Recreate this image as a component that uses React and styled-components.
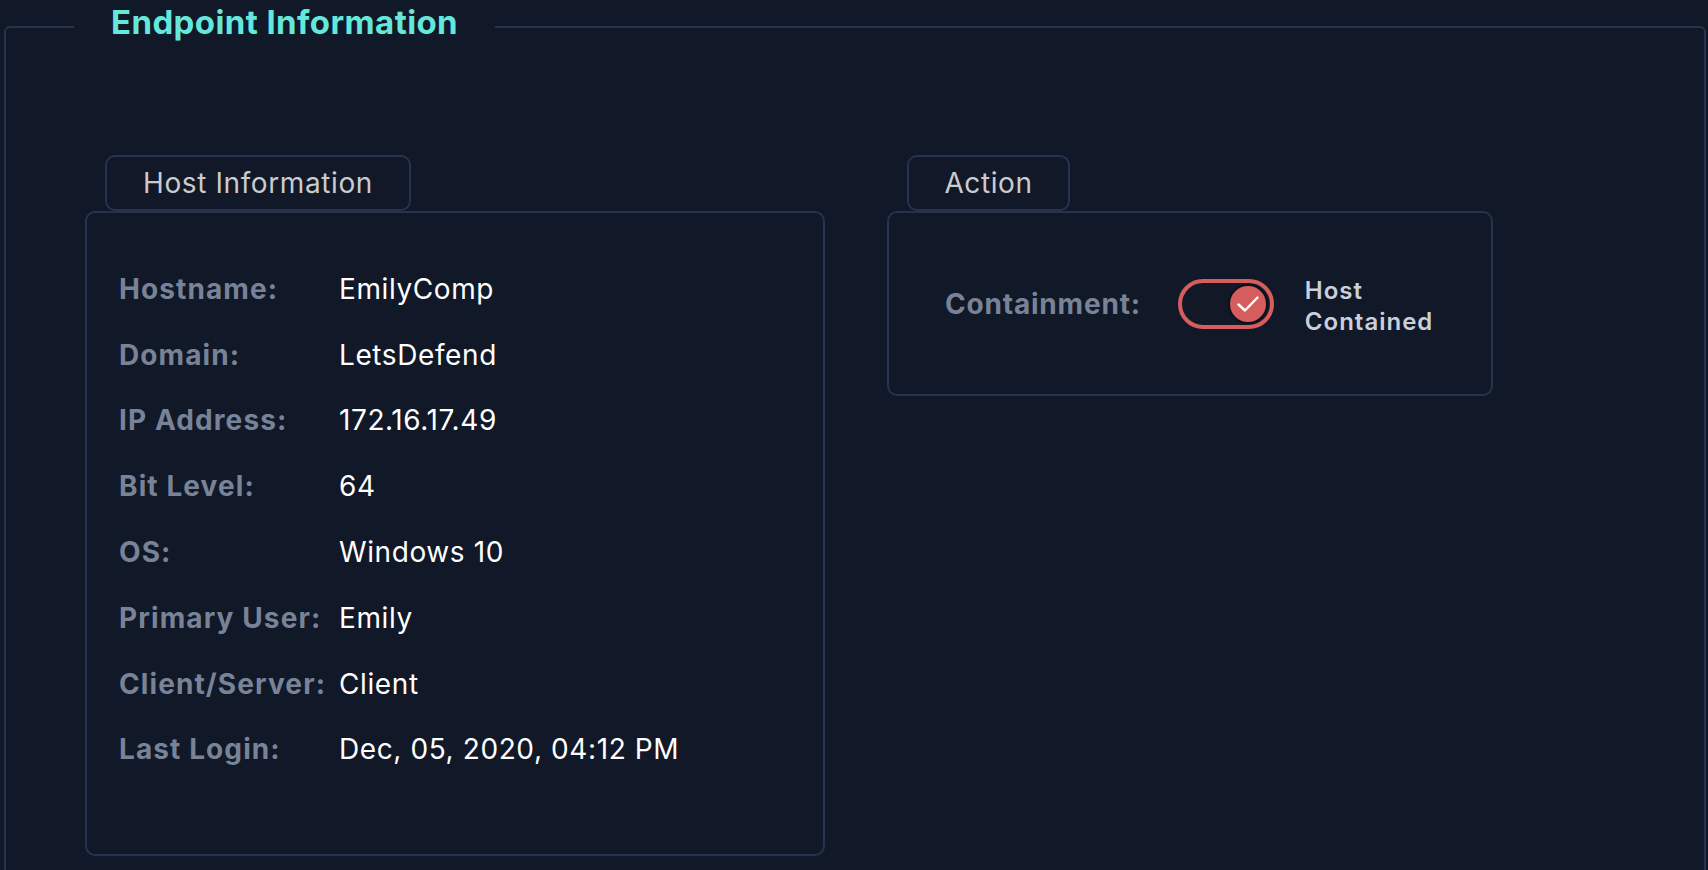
import React from "react";
import styled, { createGlobalStyle } from "styled-components";

const Global = createGlobalStyle`
  html, body {
    margin: 0;
    padding: 0;
    background: #111827;
    overflow: hidden;
    font-family: Inter, "Noto Sans", sans-serif;
  }
  * { box-sizing: border-box; }
`;

const Frame = styled.fieldset`
  margin: 6px 2px 0 4px;
  padding: 0;
  min-height: 900px;
  border: 2px solid #263250;
  border-radius: 6px;
`;

const Legend = styled.legend`
  margin-left: 68px;
  padding: 0 37px 8px;
  font-size: 33px;
  line-height: 33px;
  font-weight: 700;
  letter-spacing: 0.4px;
  color: #64e8dc;
`;

const Content = styled.div`
  padding: 108px 0 0 79px;
  display: flex;
  align-items: flex-start;
  gap: 62px;
`;

const Column = styled.section`
  display: flex;
  flex-direction: column;
  width: ${(p) => p.$width}px;
`;

const Tab = styled.div`
  margin-left: 20px;
  width: ${(p) => p.$width}px;
  height: 56px;
  border: 2px solid #263250;
  border-radius: 10px;
  display: flex;
  align-items: center;
  justify-content: center;
  font-size: 28px;
  letter-spacing: 0.6px;
  color: #cacbce;
`;

const Box = styled.div`
  border: 2px solid #263250;
  border-radius: 10px;
  padding: ${(p) => p.$pad};
  height: ${(p) => p.$height}px;
`;

const InfoGrid = styled.dl`
  margin: 0;
  display: grid;
  grid-template-columns: 220px 1fr;
  grid-auto-rows: 65.8px;
  align-items: center;
`;

const Label = styled.dt`
  font-size: 28px;
  font-weight: 700;
  letter-spacing: 1.1px;
  color: #788397;
  white-space: nowrap;
`;

const Value = styled.dd`
  margin: 0;
  font-size: 28px;
  font-weight: 400;
  letter-spacing: 0.6px;
  color: #ffffff;
  white-space: nowrap;
`;

const ActionRow = styled.div`
  height: 100%;
  display: flex;
  align-items: center;
`;

const ActionLabel = styled.span`
  font-size: 28px;
  font-weight: 700;
  letter-spacing: 0.8px;
  color: #788397;
  margin-right: 37px;
`;

const Toggle = styled.div`
  width: 96px;
  height: 50px;
  border: 4px solid #d65d5d;
  border-radius: 25px;
  background: #121826;
  display: flex;
  align-items: center;
  justify-content: flex-end;
  padding-right: 2px;
  margin-right: 31px;
`;

const Knob = styled.div`
  width: 40px;
  height: 40px;
  border-radius: 50%;
  background: #d65d5d;
  border: 2px solid #0c111c;
  display: flex;
  align-items: center;
  justify-content: center;
`;

const Status = styled.span`
  padding-top: 4px;
  font-size: 24px;
  line-height: 31px;
  font-weight: 600;
  letter-spacing: 1px;
  color: #c9d0db;
`;

const rows = [
  ["Hostname:", "EmilyComp"],
  ["Domain:", "LetsDefend"],
  ["IP Address:", "172.16.17.49"],
  ["Bit Level:", "64"],
  ["OS:", "Windows 10"],
  ["Primary User:", "Emily"],
  ["Client/Server:", "Client"],
  ["Last Login:", "Dec, 05, 2020, 04:12 PM"],
];

export default function App() {
  return (
    <>
      <Global />
      <Frame>
        <Legend>Endpoint Information</Legend>
        <Content>
          <Column $width={740}>
            <Tab $width={306}>Host Information</Tab>
            <Box $pad="43px 20px 0 32px" $height={645}>
              <InfoGrid>
                {rows.map(([l, v]) => (
                  <React.Fragment key={l}>
                    <Label>{l}</Label>
                    <Value>{v}</Value>
                  </React.Fragment>
                ))}
              </InfoGrid>
            </Box>
          </Column>
          <Column $width={606}>
            <Tab $width={163}>Action</Tab>
            <Box $pad="0 20px 0 56px" $height={185}>
              <ActionRow>
                <ActionLabel>Containment:</ActionLabel>
                <Toggle>
                  <Knob>
                    <svg width="24" height="18" viewBox="0 0 24 18" fill="none">
                      <path d="M2.5 9.5 L9 15.5 L21.5 2.5" stroke="#fff" strokeWidth="2.4" strokeLinecap="round" strokeLinejoin="round" />
                    </svg>
                  </Knob>
                </Toggle>
                <Status>
                  Host
                  <br />
                  Contained
                </Status>
              </ActionRow>
            </Box>
          </Column>
        </Content>
      </Frame>
    </>
  );
}
